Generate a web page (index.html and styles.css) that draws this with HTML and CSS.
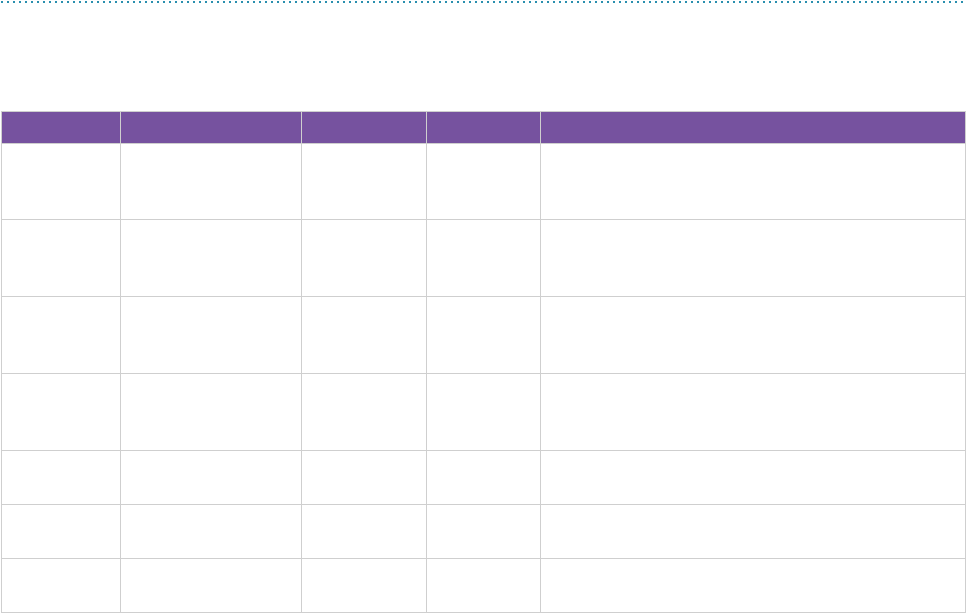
FILE: index.html
```html
<!DOCTYPE html>
<html lang="en">
<head>
<meta charset="utf-8">
<title>Table</title>
<link rel="stylesheet" href="styles.css">
</head>
<body>
<div class="page">
  <div class="dots"></div>
  <div class="grid">
    <div class="cell head"></div><div class="cell head"></div><div class="cell head"></div><div class="cell head"></div><div class="cell head"></div>
    <div class="cell tall"></div><div class="cell tall"></div><div class="cell tall"></div><div class="cell tall"></div><div class="cell tall"></div>
    <div class="cell tall2"></div><div class="cell tall2"></div><div class="cell tall2"></div><div class="cell tall2"></div><div class="cell tall2"></div>
    <div class="cell tall2"></div><div class="cell tall2"></div><div class="cell tall2"></div><div class="cell tall2"></div><div class="cell tall2"></div>
    <div class="cell tall2"></div><div class="cell tall2"></div><div class="cell tall2"></div><div class="cell tall2"></div><div class="cell tall2"></div>
    <div class="cell short"></div><div class="cell short"></div><div class="cell short"></div><div class="cell short"></div><div class="cell short"></div>
    <div class="cell short"></div><div class="cell short"></div><div class="cell short"></div><div class="cell short"></div><div class="cell short"></div>
    <div class="cell short"></div><div class="cell short"></div><div class="cell short"></div><div class="cell short"></div><div class="cell short"></div>
  </div>
</div>
</body>
</html>
```
FILE: styles.css
```css
html, body {
  margin: 0;
  padding: 0;
  background: #ffffff;
  font-family: "Open Sans", "Liberation Sans", sans-serif;
}
.page {
  width: 966px;
  height: 613px;
  overflow: hidden;
  display: flex;
  flex-direction: column;
}
.dots {
  margin-top: 1px;
  height: 2px;
  background-image: repeating-linear-gradient(to right, transparent 0 1px, #2a8fae 1px 3px, transparent 3px 6px);
}
.grid {
  margin-top: 108px;
  margin-left: 1px;
  display: grid;
  grid-template-columns: 119px 181px 125px 114px 425px;
  border-left: 1px solid #cfcfcf;
  border-top: 1px solid #cfcfcf;
}
.cell {
  box-sizing: border-box;
  border-right: 1px solid #cfcfcf;
  border-bottom: 1px solid #cfcfcf;
}
.head {
  height: 32px;
  background: #76529f;
}
.tall { height: 76px; }
.tall2 { height: 77px; }
.short { height: 54px; }
```
